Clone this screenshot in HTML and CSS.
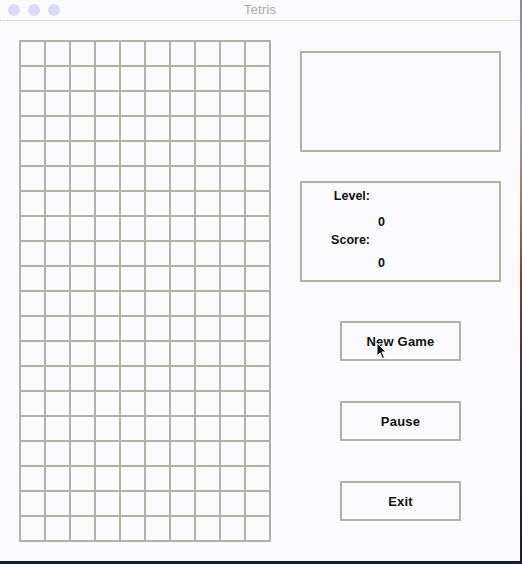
FILE: index.html
```
<!DOCTYPE html>
<html>
<head>
<meta charset="utf-8">
<title>Tetris</title>
<link rel="stylesheet" href="styles.css">
</head>
<body>
<div class="desktop">
  <div class="window">
    <div class="titlebar">
      <div class="lights"><span class="light"></span><span class="light"></span><span class="light"></span></div>
      <div class="title">Tetris</div>
    </div>
    <div class="content">
      <div class="board" id="board"></div>
      <div class="side">
        <div class="preview"></div>
        <div class="stats">
          <div class="label l1">Level:</div>
          <div class="value v1">0</div>
          <div class="label l2">Score:</div>
          <div class="value v2">0</div>
        </div>
        <div class="buttons">
          <div class="btn">New Game</div>
          <div class="btn">Pause</div>
          <div class="btn">Exit</div>
        </div>
      </div>
    </div>
    <svg class="cursor" width="12" height="18" viewBox="0 0 12 18"><path d="M1 1 L1 14 L4 11 L6.5 16.5 L8.5 15.5 L6 10 L10 10 Z" fill="#111" stroke="#fff" stroke-width="1"/></svg>
  </div>
</div>
<script>
var b=document.getElementById('board');for(var i=0;i<200;i++){var c=document.createElement('div');c.className='cell';b.appendChild(c);}
</script>
</body>
</html>
```
FILE: styles.css
```
html, body { margin: 0; padding: 0; }
body {
  width: 522px; height: 564px; overflow: hidden;
  background: linear-gradient(to bottom, #7f8ea8 0%, #9aa4b0 20%, #b07850 35%, #8a3a28 50%, #4a3040 65%, #202848 80%, #151c38 100%);
  font-family: "Liberation Sans", Arial, Helvetica, sans-serif;
}
.desktop { width: 522px; height: 564px; }
.window {
  position: relative;
  width: 520px; height: 561px;
  background: #fbfbfd;
  box-sizing: border-box;
}
.titlebar {
  height: 20px;
  border-bottom: 1px dotted #d2d29a;
  display: flex; align-items: center; justify-content: center;
  position: relative;
}
.lights { position: absolute; left: 8px; top: 4px; display: flex; gap: 8px; }
.light { width: 12px; height: 12px; border-radius: 50%; background: #d9d9fa; display: block; }
.title { font-size: 13.5px; color: #ababa0; line-height: 20px; }
.content { display: flex; padding: 19px 0 0 19px; gap: 29px; align-items: flex-start; }
.board {
  display: grid;
  grid-template-columns: repeat(10, 23px);
  grid-auto-rows: 23px;
  gap: 2px; padding: 2px;
  background: #b2b2a6;
}
.cell { background: #fbfbfd; }
.side { display: flex; flex-direction: column; padding-top: 11px; }
.preview, .stats {
  width: 201px; height: 101px; box-sizing: border-box;
  border: 2px solid #b2b2a6;
}
.stats { margin-top: 29px; font-weight: bold; font-size: 12.5px; color: #111; line-height: 14px; }
.label { width: 68px; text-align: right; }
.value { padding-left: 76px; }
.l1 { margin-top: 6px; }
.v1 { margin-top: 12px; }
.l2 { margin-top: 4px; }
.v2 { margin-top: 9px; }
.buttons { display: flex; flex-direction: column; gap: 40px; margin-top: 39px; padding-left: 40px; }
.btn {
  width: 121px; height: 40px; box-sizing: border-box;
  border: 2px solid #b2b2a6;
  display: flex; align-items: center; justify-content: center;
  font-weight: bold; font-size: 13px; color: #111; letter-spacing: 0.2px;
}
.cursor { position: absolute; left: 376px; top: 342px; }
```
